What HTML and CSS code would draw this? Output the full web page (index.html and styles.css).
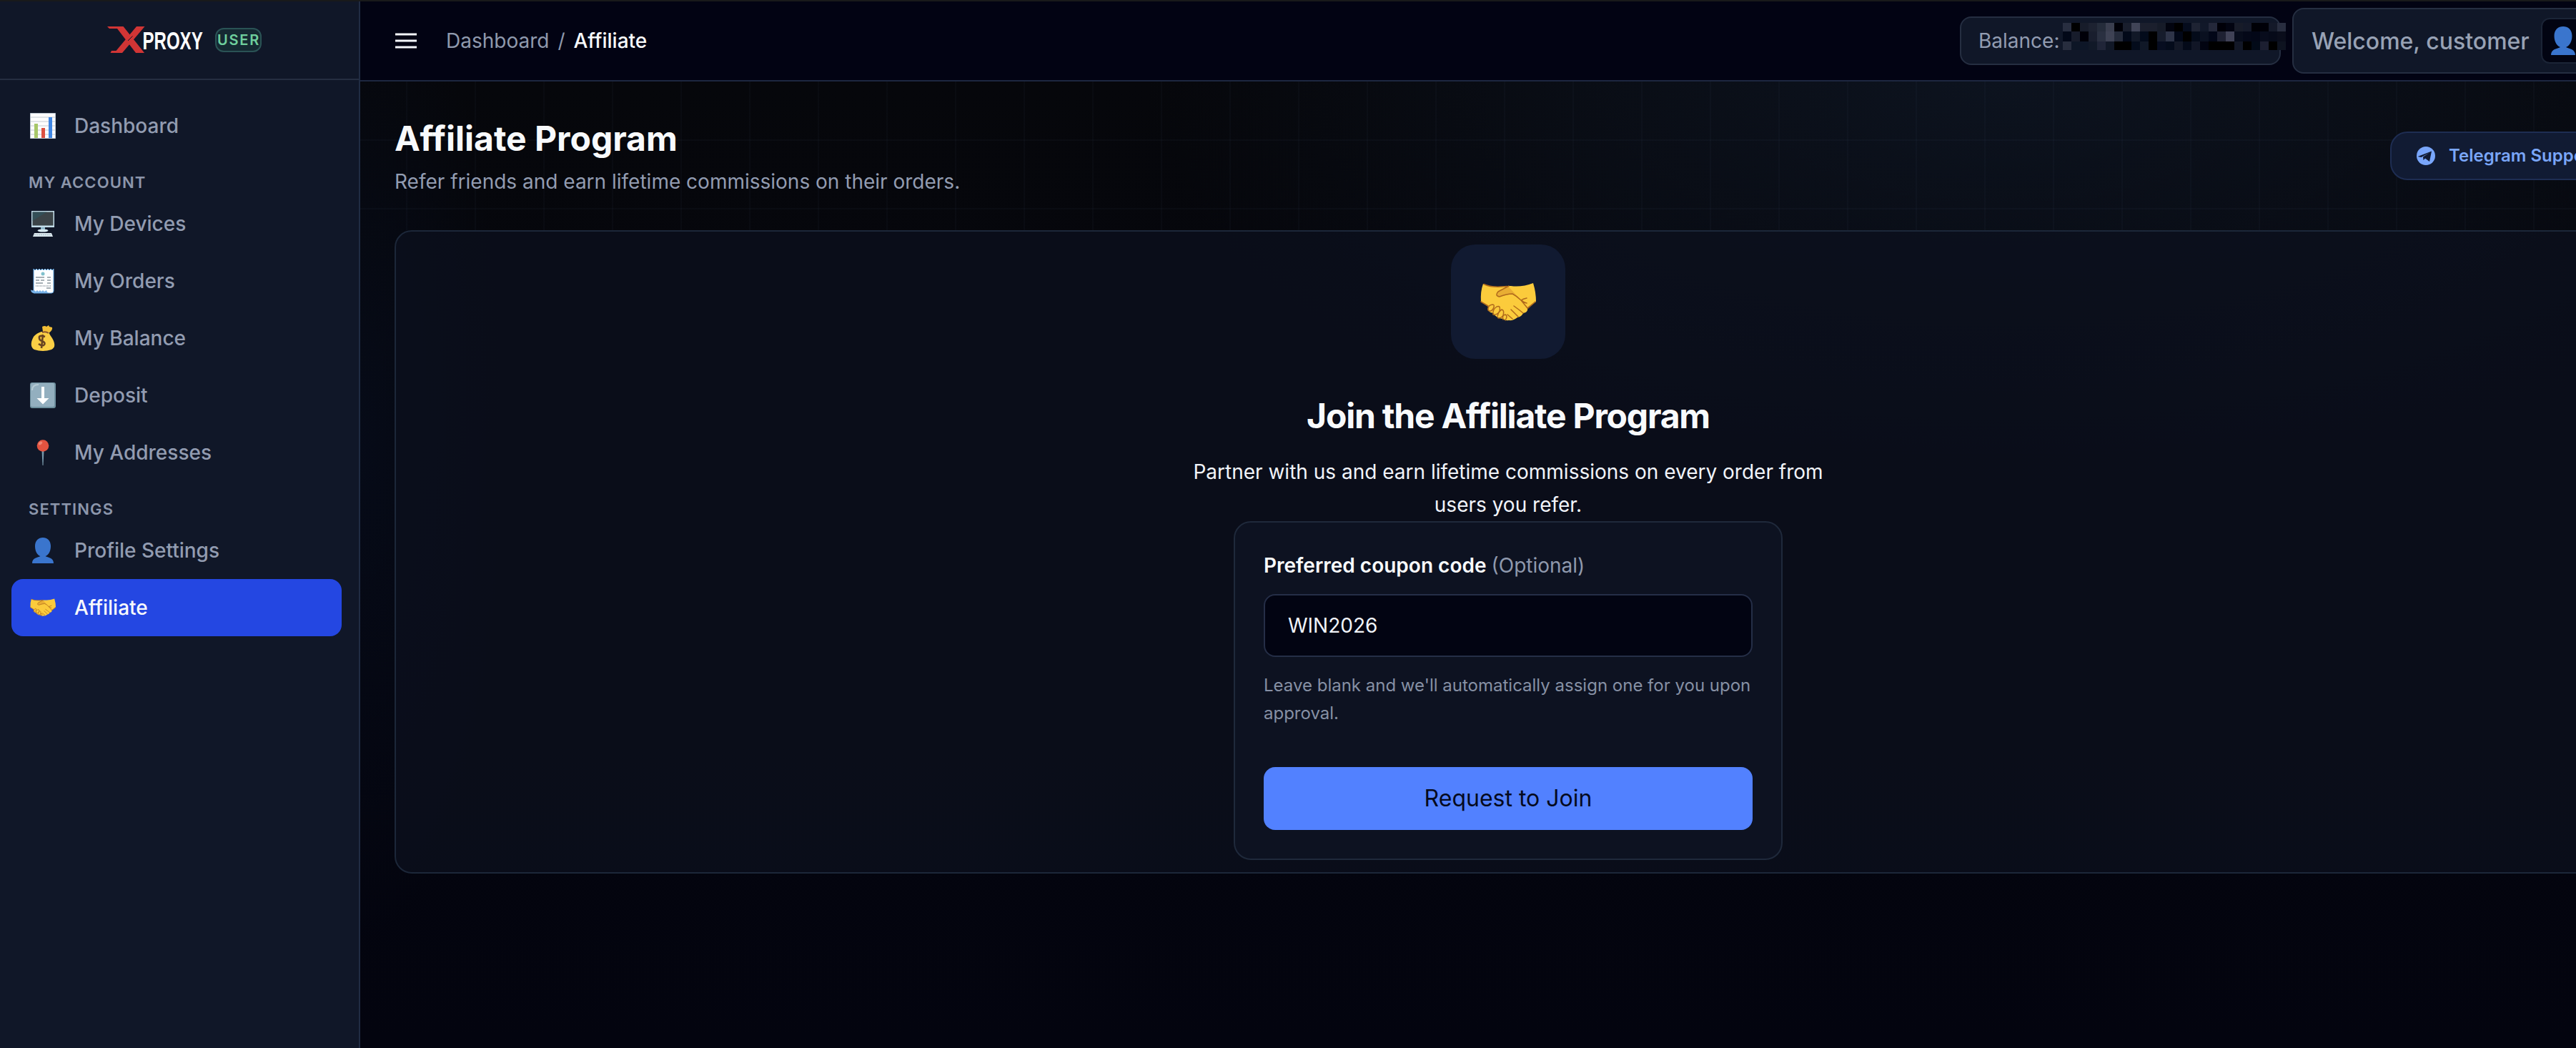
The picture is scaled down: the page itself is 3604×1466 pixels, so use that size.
FILE: index.html
```html
<!DOCTYPE html>
<html lang="en">
<head>
<meta charset="utf-8">
<title>Affiliate Program</title>
<link rel="stylesheet" href="styles.css">
</head>
<body>
<svg width="0" height="0" class="sprite" aria-hidden="true">
  <symbol id="handshake" viewBox="0 0 78 56">
    <path d="M4 2Q16 8 37 5L43 5Q58 7 74 1Q78 14 78 27Q73 31 66 36Q67 42 60 43Q58 48 52 49Q46 54 40 53Q35 54 32 51Q22 50 18 43Q9 42 11 34L1 27Q0 13 4 2Z" fill="#fbcb3c"/>
    <path d="M39 5.500L25 13Q20 19 27 20Q36 18 44 16Q51 20 57 25Q62 31 67 38L64 40L78 27Q72 32 66 35L56 24Z" fill="#d08a28" opacity=".45"/>
    <g fill="none" stroke="#b06a1c" stroke-width="1.500" stroke-linecap="round" stroke-linejoin="round">
      <path d="M5 2.500Q16 8 37 5.500M40 5L25 13Q20 19 27 20Q37 16 45 16Q51 19 57 25Q62 31 66 36M57 25Q60 23 65 22M58 25Q60 28 65 29M66 36L77 27M47 33Q54 38 60 43M43 38L53 48M38 45L45 51M1 27L11 33"/>
      <path d="M11 39Q10 32 17 31Q21 31 18 37Q15 42 11 39M18 45Q17 38 23 34Q29 32 27 40Q24 46 18 45M24 48Q25 41 30 38Q34 39 32 46Q30 50 25 50M32 52Q30 46 35 45Q39 47 35 53"/>
    </g>
  </symbol>
  <symbol id="person" viewBox="0 0 30 36">
    <path d="M15 0C21 0 26 4 26 12C26 20 22 25 18.500 26C22 28 30 28 30 36H0C0 28 8 28 11.500 26C8 25 4 20 4 12C4 4 9 0 15 0Z" fill="#3a75cd"/>
  </symbol>
</svg>
<div class="shell">
  <aside class="sidebar">
    <div class="brand">
      <svg class="logo" width="136" height="40" viewBox="0 0 136 40">
        <g fill="#d13535"><path d="M0 1H22.500L52 38H40L14 4H3Z"/><path d="M41 1H52.500L21 38H4.500L6 35H12.500Z"/></g>
        <path d="M29 21L35.500 14.500" stroke="#101728" stroke-width="1"/>
        <text transform="translate(49.500 33) scale(.668 1)">PROXY</text>
      </svg>
      <span class="role">USER</span>
    </div>
    <nav class="nav">
      <a class="item"><svg width="36" height="36" viewBox="0 0 36 36"><path fill="#fdfdfd" stroke="#b9c3cf" d="M.500.500h35v35H.500z"/><path stroke="#c3cad2" d="M1 6h34M1 12h34M1 18h34M1 24h34M1 30h34"/><path fill="#a7c769" d="M6 15h5v20H6z"/><path fill="#dc5141" d="M16 21h5v14h-5z"/><path fill="#4087e4" d="M26 6h5v29h-5z"/></svg>Dashboard</a>
      <h2>MY ACCOUNT</h2>
      <a class="item"><svg width="36" height="36" viewBox="0 0 36 36"><path fill="#c2dce8" d="M2 0h32v23H2z"/><path fill="#3c4448" d="M3.500 1.500h29v19h-29z"/><path fill="#2d5662" d="M3.500 1.500h20L3.500 14z" opacity=".6"/><path fill="#8bb6c9" d="M15 23h6v3h-6z"/><ellipse cx="18" cy="27.500" rx="7.500" ry="2" fill="#d5e8ef"/><path fill="#dbe8ee" d="M6 31h24l2 5H4z"/><path stroke="#a4bac6" d="M6 33.500h24" stroke-dasharray="2 1"/></svg>My Devices</a>
      <a class="item"><svg width="36" height="36" viewBox="0 0 36 36"><path fill="#fcfdfe" stroke="#5fa4e0" d="M5 1l2 2 2-2 2 2 2-2 2 2 2-2 2 2 2-2 2 2 2-2 2 2 2-2 2 2 2-2v31q0 3-3 3H5z"/><path fill="#77b2e8" d="M1 30q1 2 5 1l2 2 2-2 2 2 2-2 2 2 2-2 2 2 3-2q1 4 4 4H6q-5 0-5-5z"/><circle cx="18" cy="8" r="2.500" fill="#7fc0cc"/><g stroke="#8b969f" stroke-width="1.300"><path d="M8 13h12M24 13h5M8 17h5M15 17h5M24 17h5M8 21h10M24 21h5M23 28h6"/><path d="M8 25h21" stroke-dasharray="1 1"/></g></svg>My Orders</a>
      <a class="item"><svg width="36" height="36" viewBox="0 0 36 36"><path fill="#f3bf36" d="M18 9l-1-7q4-2 6 0l3-2 1 2 4 1q1 4-5 8z"/><path fill="#fbcf45" d="M16 9h10q1 4 5 9 7 12-1 16-12 4-24 0Q-2 29 5 16q4-5 11-7z"/><path d="M17 10q5-2 9 1" fill="none" stroke="#8a5530" stroke-width="2"/><path d="M21 16q-9-3-8 2 0 3 4 4 6 3 2 6-3 1-7-2M18 13l-2 19" fill="none" stroke="#694422" stroke-width="2.600"/></svg>My Balance</a>
      <a class="item"><svg width="36" height="36" viewBox="0 0 36 36"><rect width="36" height="36" rx="3" fill="#6e909f"/><rect x="1" y="1" width="33" height="33" rx="2" fill="#93afbf"/><path d="M3 11Q3 3 12 3" fill="none" stroke="#b5cbd5" stroke-width="2"/><path fill="#fff" d="M16 6h4v16h6.500L18 30.500 9.500 22H16z"/></svg>Deposit</a>
      <a class="item"><svg width="36" height="36" viewBox="0 0 36 36"><path fill="#7898aa" d="M16.500 15h3L18.500 36h-1z"/><circle cx="18" cy="8.500" r="8.300" fill="#e35340"/><ellipse cx="14.500" cy="5" rx="3" ry="2" transform="rotate(-40 14.500 5)" fill="#ee8573"/></svg>My Addresses</a>
      <h2>SETTINGS</h2>
      <a class="item"><svg width="36" height="36"><use href="#person"/></svg>Profile Settings</a>
      <a class="item active"><svg width="36" height="36"><use href="#handshake"/></svg>Affiliate</a>
    </nav>
  </aside>
  <div class="page">
    <header class="topbar">
      <svg class="menu" width="30" height="24" viewBox="0 0 30 24"><path d="M0 3h30M0 12h30M0 21h30" stroke="#f4f6fa" stroke-width="3"/></svg>
      <div class="crumbs"><span>Dashboard</span><span>/</span><b>Affiliate</b></div>
      <div class="balance"><span>Balance:</span><div class="mosaic" id="mosaic"></div></div>
      <div class="welcome"><span>Welcome, customer</span><div class="avatar"><svg width="34" height="40" viewBox="0 0 30 36" preserveAspectRatio="none"><use href="#person" width="30" height="36"/></svg></div></div>
    </header>
    <main class="main">
      <div class="heading">
        <div><h1>Affiliate Program</h1><p>Refer friends and earn lifetime commissions on their orders.</p></div>
        <a class="telegram"><svg width="26" height="26" viewBox="0 0 26 26"><circle cx="13" cy="13" r="13" fill="#79a6fb"/><path d="M1.500 14L21 6.500 18 21l-6-4.500L9.500 19l-.5-4.500 9-6L6.500 15z" fill="#111b33"/></svg>Telegram Support</a>
      </div>
      <section class="card">
        <div class="hero"><svg width="78" height="56"><use href="#handshake"/></svg></div>
        <h3>Join the Affiliate Program</h3>
        <p class="lead">Partner with us and earn lifetime commissions on every order from users you refer.</p>
        <form class="form">
          <label>Preferred coupon code <span>(Optional)</span></label>
          <div class="input">WIN2026</div>
          <p class="help">Leave blank and we'll automatically assign one for you upon approval.</p>
          <div class="submit">Request to Join</div>
        </form>
      </section>
    </main>
  </div>
</div>
<script src="mosaic.js"></script>
</body>
</html>
```
FILE: styles.css
```css
* { box-sizing: border-box; margin: 0; padding: 0; }
html, body { width: 3604px; height: 1466px; overflow: hidden; }
body { background: #020412; color: #f8fafc; font-family: Inter, "Liberation Sans", sans-serif; font-size: 28px; }
.sprite { position: absolute; }
.shell { display: flex; width: 3716px; height: 1466px; border-top: 2px solid #191a1b; }
.sidebar { width: 504px; flex: none; background: #101728; border-right: 2px solid #202c43; }
.brand { height: 110px; display: flex; align-items: center; justify-content: center; gap: 15px; padding-left: 14px; border-bottom: 2px solid #252e41; }
.brand .logo { margin-top: -1px; overflow: visible; }
.logo text { font: bold 36px "Liberation Sans", Arial, sans-serif; fill: #fff; }
.role { width: 65px; height: 34px; border: 2px solid #2a5355; border-radius: 12px; background: #152932; color: #6fcf9d; font-size: 20px; line-height: 30px; font-weight: 600; letter-spacing: 1.8px; padding-left: 1px; text-align: center; }
.nav { padding: 24px 24px 0 16px; }
.item { height: 80px; display: flex; align-items: center; gap: 26px; padding-left: 26px; border-radius: 16px; color: #929cb1; font-weight: 500; }
.item.active { background: #2447e2; color: #f8fafc; }
.nav h2 { height: 57px; padding: 25px 0 0 24px; font-size: 22px; line-height: 28px; font-weight: 600; letter-spacing: 1.1px; color: #8c96ab; }
.page { flex: 1; min-width: 0; display: flex; flex-direction: column; }
.topbar { height: 112px; flex: none; display: flex; align-items: center; padding: 0 48px 0 49px; background: #020313; border-bottom: 2px solid #1d2740; }
.crumbs { display: flex; gap: 12px; margin-left: 41px; flex: 1; color: #8f99ad; }
.crumbs b { font-weight: 500; color: #f8fafc; }
.balance { width: 449px; height: 68px; border: 2px solid #252e41; border-radius: 16px; background: #101728; color: #929cb1; display: flex; align-items: center; padding-left: 24px; margin-right: 16px; }
.balance span { width: 118px; flex: none; }
.mosaic { display: grid; grid-template-columns: repeat(26, 12px); grid-template-rows: 12px 14px 12px; margin-top: -12px; position: relative; }
.welcome { width: 461px; height: 92px; border: 2px solid #252e41; border-radius: 16px; background: #101728; color: #98a2b5; display: flex; align-items: center; padding-left: 25px; font-size: 32px; font-weight: 500; }
.welcome span { width: 321px; flex: none; white-space: nowrap; }
.avatar { width: 64px; height: 64px; border: 2px solid #1b2436; border-radius: 12px; background: #020412; display: flex; align-items: center; padding-left: 12px; }
.avatar svg { flex: none; }
.main { flex: 1; padding: 0 48px; background:
  repeating-linear-gradient(90deg, transparent 0 64px, rgba(120,150,200,.03) 64px 66px, transparent 66px 96px) 0 0 / 100% 208px no-repeat,
  repeating-linear-gradient(180deg, transparent 0 81px, rgba(120,150,200,.035) 81px 83px, transparent 83px 96px) 0 0 / 100% 208px no-repeat,
  radial-gradient(1200px 560px at 2300px 0, rgba(17,27,44,.6), transparent),
  radial-gradient(200px 700px at 0 500px, rgba(8,18,40,.4), transparent),
  linear-gradient(#06070b 0, #05060d 500px, #03040f 100%); }
.heading { height: 208px; display: flex; justify-content: space-between; }
.heading h1 { font-size: 48px; line-height: 58px; font-weight: 700; margin-top: 51px; }
.heading p { line-height: 44px; margin-top: 9px; color: #929cb1; }
.telegram { width: 324px; height: 68px; margin-top: 70px; border: 2px solid #1e2d52; border-radius: 24px; background: #111b33; display: flex; align-items: center; gap: 19px; padding: 0 0 1px 35px; font-size: 24px; font-weight: 600; color: #7aa6f8; white-space: nowrap; }
.card { height: 900px; border: 2px solid #1c2739; border-radius: 24px; background: rgba(13,17,31,.72); padding-top: 18px; display: flex; flex-direction: column; align-items: center; }
.hero { width: 160px; height: 160px; border-radius: 34px; background: #111a31; display: flex; align-items: center; justify-content: center; }
.hero svg { margin-top: 2px; }
.card h3 { margin-top: 49px; font-size: 48px; line-height: 62px; font-weight: 700; letter-spacing: -1.2px; }
.lead { width: 896px; margin-top: 25px; line-height: 45.500px; text-align: center; color: #f1f4fa; }
.form { width: 768px; height: 474px; border: 2px solid #1f293b; border-radius: 24px; background: #0d1221; padding: 40px 40px 0; }
.form label { display: block; line-height: 40px; font-weight: 600; }
.form label span { font-weight: 400; color: #8f99ad; }
.input { height: 88px; margin-top: 20px; border: 2px solid #252e47; border-radius: 16px; background: #020412; padding-left: 32px; line-height: 84px; color: #f1f4fa; }
.help { margin-top: 20px; font-size: 24px; line-height: 39px; color: #8690a4; }
.submit { height: 88px; margin-top: 56px; border-radius: 16px; background: #5281ff; color: #050a1e; font-size: 32px; line-height: 88px; text-align: center; }
```
FILE: mosaic.js
```js
// Obscures the account balance with a grid of blocks.
const rows = [
  "282e40 000000 171c2a 1d2231 252c3b 3a3e4f 000008 191e2d 404457 1b1f2d 1b1f2d 161b28 02040f 000000 050c1d 1e2333 111829 24283a 000008 020411 171b28 141929 000006 000008 141929 282d3f",
  "020818 171c2b 000009 191e2e 2a3041 3e4254 252b3b 020919 111827 030b1b 000000 161c2c 2e3448 020818 000000 040b1a 0a1020 020718 1e2132 404256 070c1b 040818 030717 080c1c 060a19 0a0d1b",
  "272d3e 0d1626 0d1627 111928 202538 111827 000000 000000 040c1c 101827 000000 070d20 040b1b 131827 040a19 111626 020411 000000 000000 000000 131827 000000 020a18 1c1f31 000000 0e1320"
];
document.getElementById("mosaic").innerHTML = rows
  .flatMap(row => row.split(" "))
  .map(color => `<i style="background:#${color}"></i>`)
  .join("");
```
